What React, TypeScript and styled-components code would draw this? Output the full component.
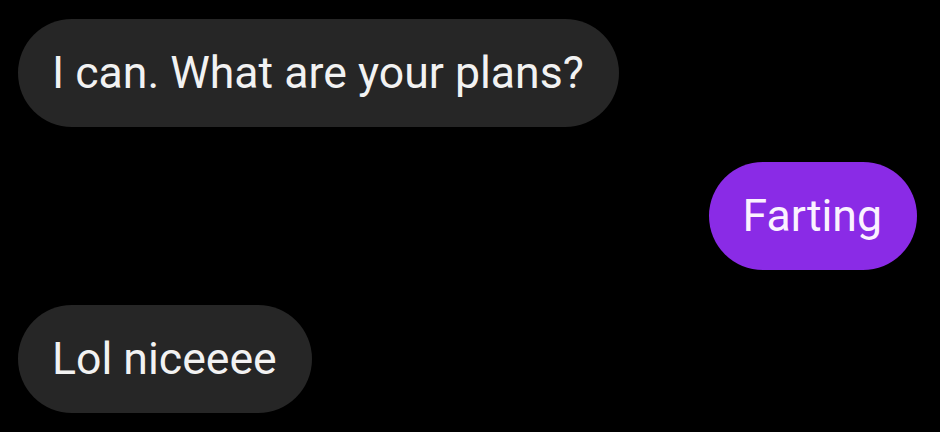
import React from "react";
import styled, { createGlobalStyle } from "styled-components";

const Global = createGlobalStyle`
  html, body { margin: 0; padding: 0; background: #000; }
  body { width: 940px; height: 432px; overflow: hidden; }
`;

const Thread = styled.div`
  display: flex;
  flex-direction: column;
  gap: 35px;
  padding: 19px 23px 0 18px;
  background: #000;
  height: 432px;
  box-sizing: border-box;
  font-family: Roboto, "Noto Sans", sans-serif;
`;

const Row = styled.div<{ $mine?: boolean }>`
  display: flex;
  justify-content: ${(p) => (p.$mine ? "flex-end" : "flex-start")};
`;

const Bubble = styled.div<{ $mine?: boolean }>`
  height: 108px;
  box-sizing: border-box;
  display: flex;
  align-items: center;
  padding: 0 35px 0 34px;
  border-radius: 54px;
  background: ${(p) => (p.$mine ? "#8a2be6" : "#262626")};
  color: ${(p) => (p.$mine ? "#fbf2ff" : "#f2f2f2")};
  font-size: 44.6px;
  line-height: 1;
  white-space: nowrap;
`;

export default function App() {
  return (
    <>
      <Global />
      <Thread>
        <Row>
          <Bubble>I can. What are your plans?</Bubble>
        </Row>
        <Row $mine>
          <Bubble $mine>Farting</Bubble>
        </Row>
        <Row>
          <Bubble>Lol niceeee</Bubble>
        </Row>
      </Thread>
    </>
  );
}
